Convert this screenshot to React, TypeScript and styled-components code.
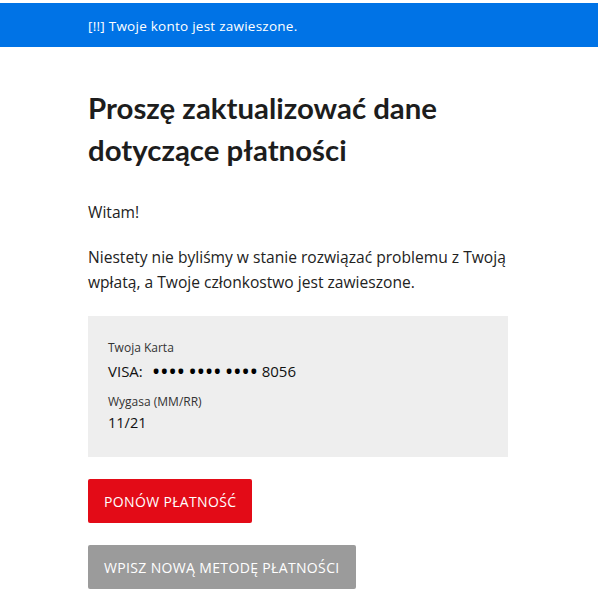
import styled, { createGlobalStyle } from "styled-components";

const GlobalStyle = createGlobalStyle`
    body {
        margin: 0;
        background: #fff;
        font-family: "Open Sans", "Noto Sans", sans-serif;
        color: #222;
    }
`;

const AlertBar = styled.div`
    margin-top: 3px;
    background: #0073e6;
    color: #fff;
    height: 44px;
    display: flex;
    align-items: center;
`;

const Container = styled.div`
    width: 420px;
    margin-left: 88px;
`;

const AlertText = styled.span`
    font-size: 13.5px;
    letter-spacing: 0.25px;
`;

const Title = styled.h1`
    margin: 40px 0 29px;
    font-family: Lato, "Open Sans", sans-serif;
    font-size: 29.4px;
    font-weight: 700;
    line-height: 42px;
    color: #1d1d1d;
`;

const Paragraph = styled.p`
    margin: 0 0 20px;
    font-size: 15.6px;
    line-height: 25px;
`;

const Card = styled.div`
    background: #eee;
    padding: 24px 20px 23px;
    margin-top: 21px;
`;

const CardLabel = styled.div`
    font-size: 12px;
    line-height: 16px;
    color: #333;
`;

const CardValue = styled.div<{ $big?: boolean }>`
    font-size: ${(p) => (p.$big ? "15px" : "14.5px")};
    line-height: 22px;
    margin: ${(p) => (p.$big ? "4px 0 11px" : "2px 0 0")};
    color: #111;
`;

const Dots = styled.span`
    font-size: 23px;
    line-height: 1;
    vertical-align: -3px;
    letter-spacing: -0.4px;
    word-spacing: -2px;
    margin-left: 5px;
    color: #000;
`;

const Actions = styled.div`
    display: flex;
    flex-direction: column;
    align-items: flex-start;
    gap: 22px;
    margin-top: 22px;
`;

const Button = styled.button<{ $variant: "primary" | "secondary" }>`
    height: 44px;
    padding: 0 16px;
    border: none;
    border-radius: 2px;
    font-family: inherit;
    font-size: 14px;
    letter-spacing: 0.35px;
    text-transform: uppercase;
    color: #fff;
    background: ${(p) => (p.$variant === "primary" ? "#e30b17" : "#9b9b9b")};
    cursor: pointer;
`;

export default function App() {
    return (
        <>
            <GlobalStyle />
            <AlertBar>
                <Container>
                    <AlertText>[!!] Twoje konto jest zawieszone.</AlertText>
                </Container>
            </AlertBar>
            <Container>
                <Title>Proszę zaktualizować dane dotyczące płatności</Title>
                <Paragraph>Witam!</Paragraph>
                <Paragraph>
                    Niestety nie byliśmy w stanie rozwiązać problemu z Twoją wpłatą, a Twoje
                    członkostwo jest zawieszone.
                </Paragraph>
                <Card>
                    <CardLabel>Twoja Karta</CardLabel>
                    <CardValue $big>
                        VISA: <Dots>•••• •••• ••••</Dots> 8056
                    </CardValue>
                    <CardLabel>Wygasa (MM/RR)</CardLabel>
                    <CardValue>11/21</CardValue>
                </Card>
                <Actions>
                    <Button $variant="primary">Ponów płatność</Button>
                    <Button $variant="secondary">Wpisz nową metodę płatności</Button>
                </Actions>
            </Container>
        </>
    );
}
